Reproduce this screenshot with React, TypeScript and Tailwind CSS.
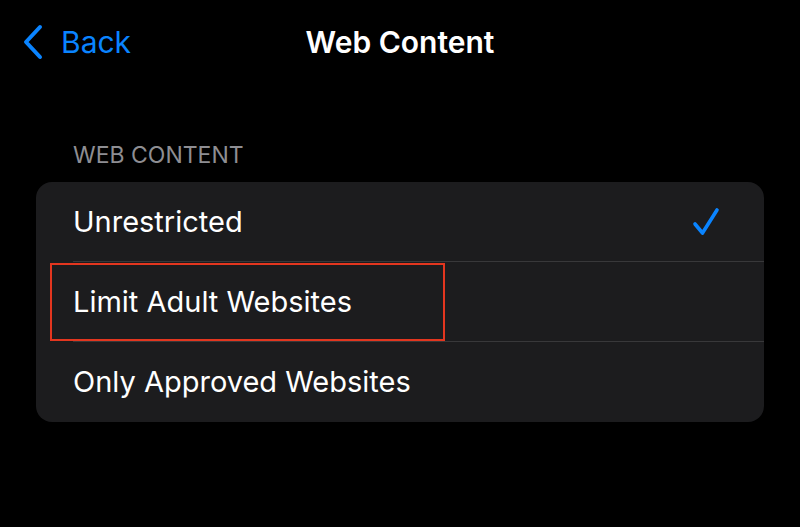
import React from "react";

const OPTIONS = ["Unrestricted", "Limit Adult Websites", "Only Approved Websites"];

function Chevron() {
  return (
    <svg width="22" height="36" viewBox="0 0 22 36" fill="none">
      <path
        d="M18 3 L4 18 L18 33"
        stroke="#0a84ff"
        strokeWidth="4"
        strokeLinecap="round"
        strokeLinejoin="round"
      />
    </svg>
  );
}

function Check() {
  return (
    <svg width="28" height="30" viewBox="0 0 28 30" fill="none">
      <path
        d="M3 17 L10.5 26 L25 3"
        stroke="#0a84ff"
        strokeWidth="3.6"
        strokeLinecap="round"
        strokeLinejoin="round"
      />
    </svg>
  );
}

export default function App() {
  const selected = 0;

  return (
    <div
      className="h-[527px] w-[800px] overflow-hidden bg-black text-white"
      style={{ fontFamily: "Inter, 'Noto Sans', sans-serif" }}
    >
      <header className="grid h-[84px] grid-cols-[1fr_auto_1fr] items-center">
        <button className="flex items-center gap-[17px] pl-[22px] text-[30px] text-[#0a84ff]">
          <Chevron />
          <span className="leading-none">Back</span>
        </button>
        <h1 className="text-[30px] font-semibold">Web Content</h1>
        <div />
      </header>

      <section className="px-[36px]">
        <div className="mb-[13px] mt-[57px] pl-[37px] text-[23px] leading-[28px] text-[#8e8e93]">
          WEB CONTENT
        </div>

        <div className="relative overflow-hidden rounded-[16px] bg-[#1c1c1e]">
          {OPTIONS.map((label, i) => (
            <div key={label} className="pl-[37px]">
              <div
                className={
                  "flex h-[80px] items-center justify-between pr-[44px] " +
                  (i < OPTIONS.length - 1 ? "border-b border-[#38383a]" : "")
                }
              >
                <span className="text-[29px]">{label}</span>
                {i === selected && <Check />}
              </div>
            </div>
          ))}

          {/* annotation box */}
          <div className="pointer-events-none absolute left-[14px] top-[81px] h-[78px] w-[395px] border-2 border-[#e3361f]" />
        </div>
      </section>
    </div>
  );
}
